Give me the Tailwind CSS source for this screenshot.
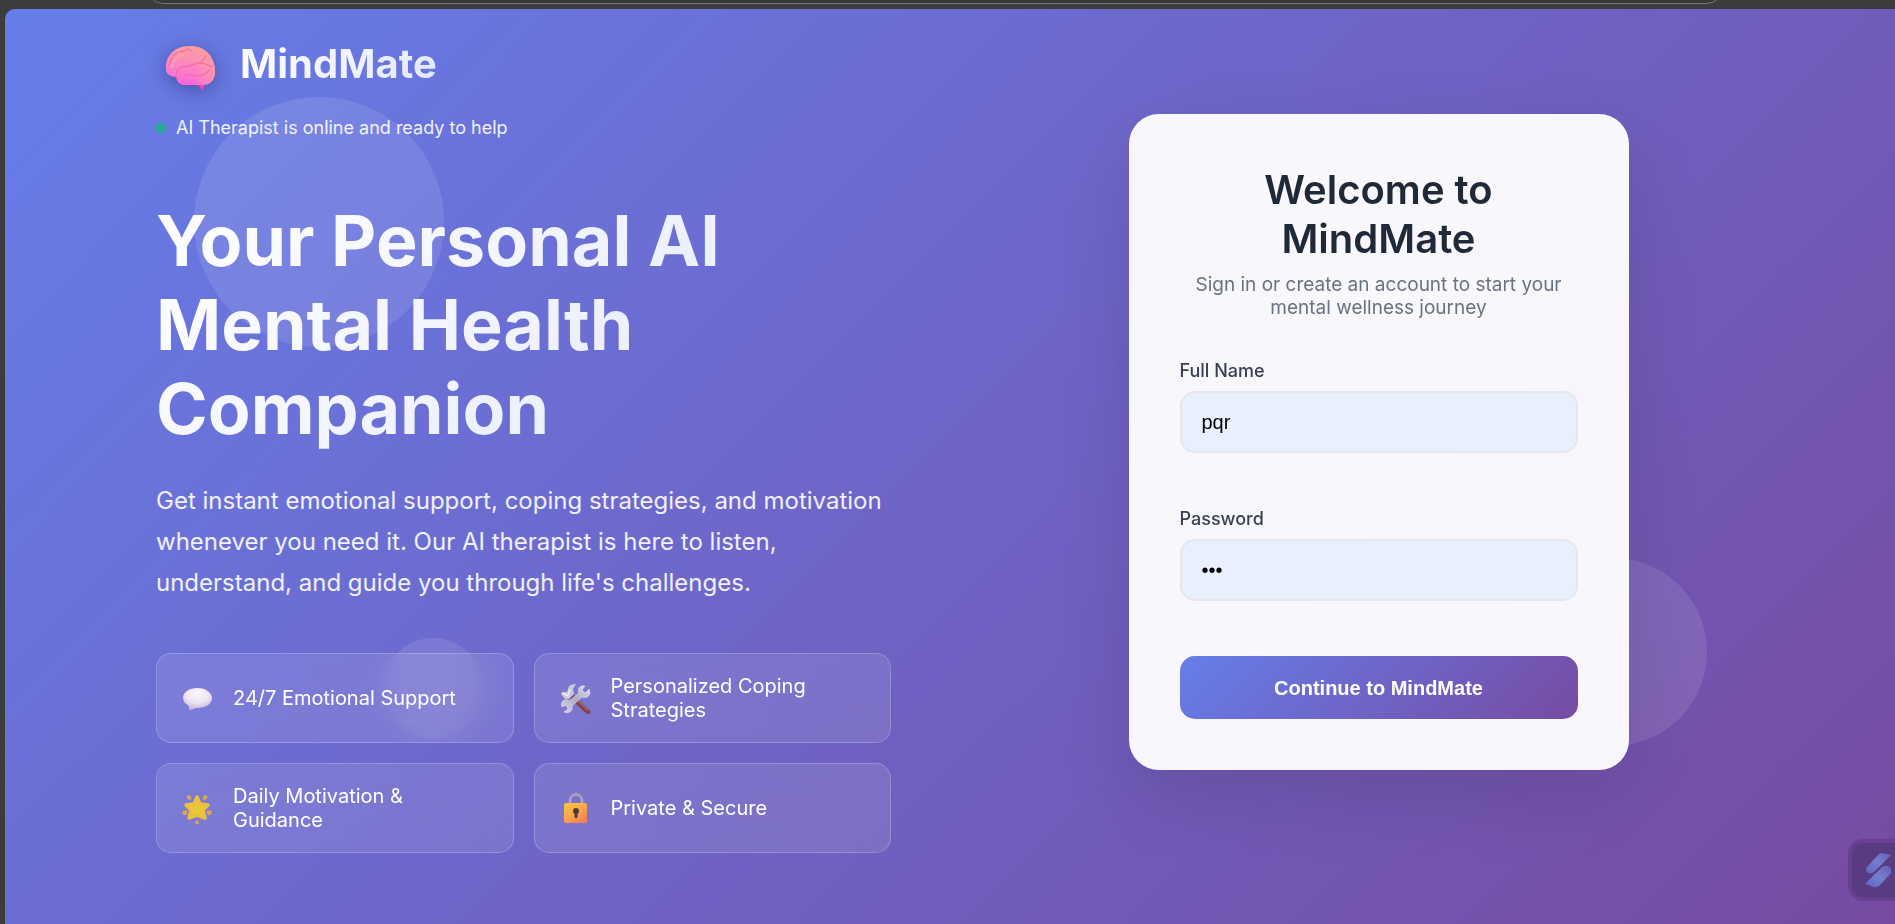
<!DOCTYPE html>
<html lang="en">
<head>
<meta charset="utf-8">
<title>MindMate</title>
<script src="https://cdn.jsdelivr.net/npm/@tailwindcss/browser@4"></script>
</head>
<body class="flex min-h-screen flex-col overflow-x-hidden bg-[#3c3c3c] font-['Inter',sans-serif]">
<!-- Lower edge of the browser's address bar -->
<div class="h-[9px] overflow-hidden pr-[171px] pl-[146px]">
  <div class="-mt-8 h-9 rounded-[18px] border border-[#77776f] bg-[#373737]"></div>
</div>
<div class="relative isolate ml-[5px] flex-1 overflow-hidden rounded-tl-[10px] bg-[linear-gradient(135deg,#667eea_0%,#764ba2_100%)]">
  <!-- Floating circles -->
  <div class="absolute top-[88px] left-[189px] -z-10 size-[250px] rounded-full bg-white/10"></div>
  <div class="absolute top-[549px] right-[188px] -z-10 size-[188px] rounded-full bg-white/10"></div>
  <div class="absolute top-[629px] left-[378px] -z-10 size-[100px] rounded-full bg-white/10"></div>

  <main class="grid grid-cols-2 gap-[120px] pr-[149px] pl-[151px] pb-[60px]">
    <section class="pt-[27px]">
      <header>
        <div class="flex h-14 items-center gap-6 pl-[9px]">
          <svg class="mt-2 h-[46px] w-[51px] overflow-visible drop-shadow-[0_4px_10px_rgba(30,30,90,0.45)]" viewBox="0 0 51 46" aria-hidden="true">
            <defs>
              <linearGradient id="brain" x1="0.55" y1="0" x2="0.4" y2="1"><stop offset="0" stop-color="#fc9f9c"/><stop offset=".5" stop-color="#fd86c2"/><stop offset="1" stop-color="#fb66dc"/></linearGradient>
              <linearGradient id="brainEdge" x1="0" x2="1"><stop offset=".6" stop-color="#ffa0a8" stop-opacity="0"/><stop offset="1" stop-color="#ff9aa6" stop-opacity=".8"/></linearGradient>
            </defs>
            <path d="M31 37 37 45Q40 46 39 37Z" fill="#ec45b4"/>
            <path d="M1 24C0 12 9 1 24 1 39 0 49 11 50 24 51 34 46 40 38 40L20 40C14 40 12 36 11 32 7 31 1 31 1 24Z" fill="url(#brain)"/>
            <path d="M1 24C0 12 9 1 24 1 39 0 49 11 50 24 51 34 46 40 38 40L20 40C14 40 12 36 11 32 7 31 1 31 1 24Z" fill="url(#brainEdge)"/>
            <g fill="none" stroke="#e0688f" stroke-linecap="round" stroke-width="1.2" opacity=".65">
              <path d="M4 20C6 11 12 6 20 6"/><path d="M17 7 23 4 27 6"/><path d="M11 31C11 25 15 21 20 22 24 22 27 19 33 18 38 17 40 14 41 10"/><path d="M34 18C40 18 43 20 47 22"/><path d="M20 30C27 28 31 33 38 30 42 29 43 27 44 25"/>
            </g>
            <path d="M7 22C8 16 11 12 16 11" fill="none" stroke="#ffabb8" stroke-width="3" stroke-linecap="round" opacity=".5"/>
          </svg>
          <span class="bg-[linear-gradient(135deg,#ffffff,#e0e7ff)] bg-clip-text text-[40px] leading-[56px] font-bold text-transparent">MindMate</span>
        </div>
        <p class="mt-6 flex items-center gap-[10px] text-[18px] leading-6 text-white/90"><span class="size-[10px] rounded-full bg-[#10b981]/75 shadow-[0_0_3px_rgba(16,185,129,0.5)]"></span>AI Therapist is online and ready to help</p>
      </header>
      <h1 class="mt-[59px] bg-[linear-gradient(135deg,#ffffff,#e0e7ff)] bg-clip-text text-[70px] leading-[84px] font-bold text-transparent">Your Personal AI<br>Mental Health<br>Companion</h1>
      <p class="mt-[29px] text-[24px] leading-[41px] text-white/90">Get instant emotional support, coping strategies, and motivation whenever you need it. Our AI therapist is here to listen, understand, and guide you through life's challenges.</p>
      <ul class="mt-[50px] grid auto-rows-[90px] grid-cols-2 gap-5 text-[20px] leading-6 text-white">
        <li class="flex items-center gap-5 rounded-[15px] border border-white/20 bg-white/10 px-6 backdrop-blur-[12px]">
          <svg class="size-8 shrink-0" viewBox="0 0 32 32" aria-hidden="true"><defs><radialGradient id="bubble" cx=".5" cy=".25" r=".75"><stop offset="0" stop-color="#fbf8fb"/><stop offset=".6" stop-color="#ebe1f1"/><stop offset="1" stop-color="#c4acd8"/></radialGradient></defs><path d="M16.500 6C25 6 31 11 31 16 31 22 25 26 16.500 26 13 26 12 28 9 28Q7 28 8 24C4 22 2 19 2 16 2 10 8 6 16.500 6Z" fill="url(#bubble)"/></svg>
          <span>24/7 Emotional Support</span>
        </li>
        <li class="flex items-center gap-5 rounded-[15px] border border-white/20 bg-white/10 px-6 backdrop-blur-[12px]">
          <svg class="size-8 shrink-0" viewBox="0 0 32 32" aria-hidden="true"><defs><linearGradient id="wrench" x1="0" x2="1" y1="1" y2="0"><stop offset="0" stop-color="#d9d7ec"/><stop offset=".5" stop-color="#b0abc3"/><stop offset="1" stop-color="#e1dfef"/></linearGradient></defs>
            <g transform="translate(1 1)"><path d="M12 14 28 29" stroke="#824652" stroke-width="5" stroke-linecap="round"/><path d="M14 14 28 27" stroke="#a36770" stroke-width="1.5"/>
            <path d="M1 11 3 9 7 9 9 3Q12 1 16 1L13 6 14 11 9 16 5 16Z" fill="#c8c8dc"/><path d="M2 10 8 13 10 6" fill="none" stroke="#edebf7" stroke-width="1.4"/>
            <path d="M19 10C17 6 20 2 25 3L22 7 25 10 29 6C32 12 27 16 22 14L12 23C13 28 9 31 4 29L8 26 6 22 2 24C0 18 5 15 9 18Z" fill="url(#wrench)" stroke="#f1eff8" stroke-width=".5"/></g></svg>
          <span>Personalized Coping Strategies</span>
        </li>
        <li class="flex items-center gap-5 rounded-[15px] border border-white/20 bg-white/10 px-6 backdrop-blur-[12px]">
          <svg class="size-8 shrink-0" viewBox="0 0 32 32" aria-hidden="true"><defs><radialGradient id="star" cx=".55" cy=".5" r=".6"><stop offset="0" stop-color="#e5cb32"/><stop offset=".7" stop-color="#f1c63c"/><stop offset="1" stop-color="#dda135"/></radialGradient></defs>
            <path d="M16 5 19 12 27 13 22 18 24 26 16 23 8 26 10 18 5 13 13 12Z" fill="url(#star)" stroke="#eebf3d" stroke-width="3.500" stroke-linejoin="round"/>
            <path d="M7 3 10 5 9 8 6 6ZM25 3 26 6 23 8 22 5ZM2 19 6 19 5 23 2 22ZM30 19 30 22 27 23 26 19ZM16 28 18 31Q16 33 14 31Z" fill="#d8a64f" stroke="#d8a64f" stroke-linejoin="round"/></svg>
          <span>Daily Motivation &amp; Guidance</span>
        </li>
        <li class="flex items-center gap-5 rounded-[15px] border border-white/20 bg-white/10 px-6 backdrop-blur-[12px]">
          <svg class="size-8 shrink-0" viewBox="0 0 32 32" aria-hidden="true"><defs><linearGradient id="lock" x1="0" y1="0" x2=".7" y2="1"><stop offset="0" stop-color="#fbc542"/><stop offset=".55" stop-color="#fba74a"/><stop offset="1" stop-color="#f67e58"/></linearGradient></defs>
            <g transform="translate(3 0)"><path d="M8 14V9C8 0 20 0 20 9V14" fill="none" stroke="#9e96b8" stroke-width="3"/><path d="M8 13V9C8 1 20 1 20 9V13" fill="none" stroke="#beb9d1" stroke-width="1"/>
            <rect x="2" y="11" width="23" height="20" rx="2" fill="url(#lock)"/><circle cx="14" cy="19" r="3" fill="#4b3a42"/><path d="M14 20V24.500" stroke="#4b3a42" stroke-width="3" stroke-linecap="round"/></g></svg>
          <span>Private &amp; Secure</span>
        </li>
      </ul>
    </section>

    <section class="flex items-start justify-center pt-[105px]">
      <form class="w-[500px] rounded-[30px] bg-white/95 p-[51px] shadow-[0_25px_75px_rgba(0,0,0,0.12)] backdrop-blur-[25px]">
        <h2 class="text-center text-[40px] leading-[49px] font-semibold text-[#1f2937]">Welcome to<br>MindMate</h2>
        <p class="mt-[10px] text-center text-[19px] leading-[23px] text-[#6b7280]">Sign in or create an account to start your mental wellness journey</p>
        <label for="name" class="mt-[41px] block text-[18px] leading-[22px] font-medium text-[#374151]">Full Name</label>
        <input id="name" type="text" value="pqr" class="mt-[9px] block h-[62px] w-full rounded-[15px] border-2 border-[#e5e7eb] bg-[#e8f0fe] px-5 font-['Liberation_Sans',sans-serif] text-[20px] text-black">
        <label for="password" class="mt-[55px] block text-[18px] leading-[22px] font-medium text-[#374151]">Password</label>
        <input id="password" type="password" value="pqr" class="mt-[9px] block h-[62px] w-full rounded-[15px] border-2 border-[#e5e7eb] bg-[#e8f0fe] px-5 font-['Liberation_Sans',sans-serif] text-[20px] text-black">
        <button type="button" class="mt-[55px] block h-[63px] w-full rounded-[15px] bg-[linear-gradient(135deg,#667eea_0%,#764ba2_100%)] font-['Liberation_Sans',sans-serif] text-[20px] font-bold text-white">Continue to MindMate</button>
      </form>
    </section>
  </main>

  <!-- Extension launcher, partly off the right edge -->
  <button type="button" aria-label="Open assistant" class="absolute -right-4 bottom-[23px] flex h-[62px] w-[63px] items-center rounded-[15px] border-4 border-[#674191] bg-[#593b81] pl-3">
    <svg class="h-[36px] w-7" viewBox="0 0 28 36" aria-hidden="true"><defs><linearGradient id="mark" x1="0" y1="1" x2="1" y2="0"><stop offset="0" stop-color="#5d64bf"/><stop offset=".5" stop-color="#747ed0"/><stop offset="1" stop-color="#6660b5"/></linearGradient></defs>
      <path d="M4 21Q2 20 2 16L14 3Q16 1 18 1L27 3 10 20Q8 22 4 21Z" fill="url(#mark)"/><path d="M1 32 17 16Q20 13 24 14 28 15 27 21L17 32Q14 36 10 35Z" fill="url(#mark)"/></svg>
  </button>
</div>
</body>
</html>
